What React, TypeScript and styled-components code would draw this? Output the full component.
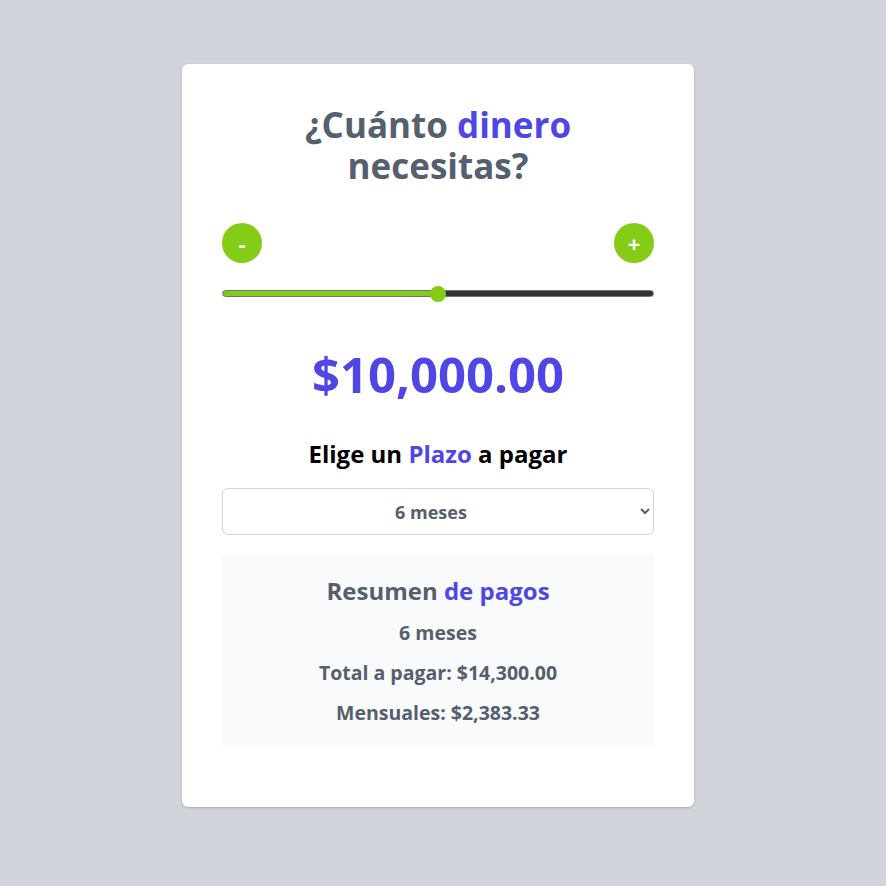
import React, { useState } from "react";
import styled, { createGlobalStyle } from "styled-components";

const GlobalStyle = createGlobalStyle`
  html, body {
    margin: 0;
    padding: 0;
    background: #d1d5db;
    font-family: "Open Sans", "Noto Sans", sans-serif;
  }
`;

const Page = styled.div`
  min-height: 886px;
  display: flex;
  justify-content: center;
  align-items: flex-start;
  padding: 64px 10px 0 0;
  box-sizing: border-box;
`;

const Card = styled.div`
  width: 512px;
  box-sizing: border-box;
  background: #ffffff;
  border-radius: 6px;
  box-shadow: 0 1px 3px rgba(0, 0, 0, 0.12), 0 1px 2px rgba(0, 0, 0, 0.08);
  padding: 40px 40px 60px;
`;

const Title = styled.h1`
  margin: 0;
  font-size: 35px;
  line-height: 41px;
  font-weight: 700;
  color: #555f6e;
  text-align: center;
  padding: 0 50px;
`;

const Accent = styled.span`
  color: #4f46e5;
`;

const Controls = styled.div`
  display: flex;
  justify-content: space-between;
  margin-top: 37px;
`;

const RoundButton = styled.button`
  width: 40px;
  height: 40px;
  border-radius: 50%;
  border: none;
  background: #84cc16;
  color: #ffffff;
  font-family: inherit;
  font-size: 22px;
  font-weight: 700;
  line-height: 1;
  display: flex;
  align-items: center;
  justify-content: center;
  padding: 0;
  cursor: pointer;
`;

const Range = styled.input`
  -webkit-appearance: none;
  appearance: none;
  display: block;
  width: 100%;
  height: 7px;
  margin: 27px 0 0;
  border-radius: 4px;
  border: 1px solid #6b7280;
  box-sizing: border-box;
  outline: none;

  &::-webkit-slider-thumb {
    -webkit-appearance: none;
    width: 16px;
    height: 16px;
    border-radius: 50%;
    background: #84cc16;
    border: none;
    cursor: pointer;
  }
`;

const Amount = styled.p`
  margin: 53px 0 0;
  text-align: center;
  font-size: 49px;
  line-height: 48px;
  font-weight: 700;
  color: #4f46e5;
`;

const Subtitle = styled.h2`
  margin: 40px 0 0;
  text-align: center;
  font-size: 24px;
  line-height: 32px;
  font-weight: 700;
  color: #000000;
`;

const Select = styled.select`
  display: block;
  width: 100%;
  height: 47px;
  margin-top: 18px;
  border: 1px solid #d1d5db;
  border-radius: 6px;
  background: #ffffff;
  font-family: inherit;
  font-size: 18px;
  font-weight: 700;
  color: #555f6e;
  text-align: center;
  text-align-last: center;
  padding: 0 10px 0 8px;
`;

const Summary = styled.div`
  margin-top: 20px;
  background: #f9fafb;
  padding: 20px;
  text-align: center;
`;

const SummaryTitle = styled.h2`
  margin: 0;
  font-size: 24px;
  line-height: 32px;
  font-weight: 700;
  color: #555f6e;
`;

const SummaryLine = styled.p`
  margin: 12px 0 0;
  font-size: 19.5px;
  line-height: 28px;
  font-weight: 700;
  color: #555f6e;
`;

const fmt = (n: number) =>
  "$" +
  n.toLocaleString("en-US", {
    minimumFractionDigits: 2,
    maximumFractionDigits: 2,
  });

const MIN = 0;
const MAX = 20000;
const STEP = 100;

export default function App() {
  const [amount, setAmount] = useState(10000);
  const [months, setMonths] = useState(6);

  const total = amount * 1.43;
  const monthly = total / months;
  const pct = ((amount - MIN) / (MAX - MIN)) * 100;

  return (
    <>
      <GlobalStyle />
      <Page>
        <Card>
          <Title>
            ¿Cuánto <Accent>dinero</Accent> necesitas?
          </Title>

          <Controls>
            <RoundButton onClick={() => setAmount(Math.max(MIN, amount - STEP))}>
              -
            </RoundButton>
            <RoundButton onClick={() => setAmount(Math.min(MAX, amount + STEP))}>
              +
            </RoundButton>
          </Controls>

          <Range
            type="range"
            min={MIN}
            max={MAX}
            step={STEP}
            value={amount}
            onChange={(e) => setAmount(Number(e.target.value))}
            style={{
              background: `linear-gradient(to right, #84cc16 ${pct}%, #333333 ${pct}%)`,
            }}
          />

          <Amount>{fmt(amount)}</Amount>

          <Subtitle>
            Elige un <Accent>Plazo</Accent> a pagar
          </Subtitle>

          <Select value={months} onChange={(e) => setMonths(Number(e.target.value))}>
            <option value={3}>3 meses</option>
            <option value={6}>6 meses</option>
            <option value={12}>12 meses</option>
            <option value={24}>24 meses</option>
          </Select>

          <Summary>
            <SummaryTitle>
              Resumen <Accent>de pagos</Accent>
            </SummaryTitle>
            <SummaryLine>{months} meses</SummaryLine>
            <SummaryLine>Total a pagar: {fmt(total)}</SummaryLine>
            <SummaryLine>Mensuales: {fmt(monthly)}</SummaryLine>
          </Summary>
        </Card>
      </Page>
    </>
  );
}
